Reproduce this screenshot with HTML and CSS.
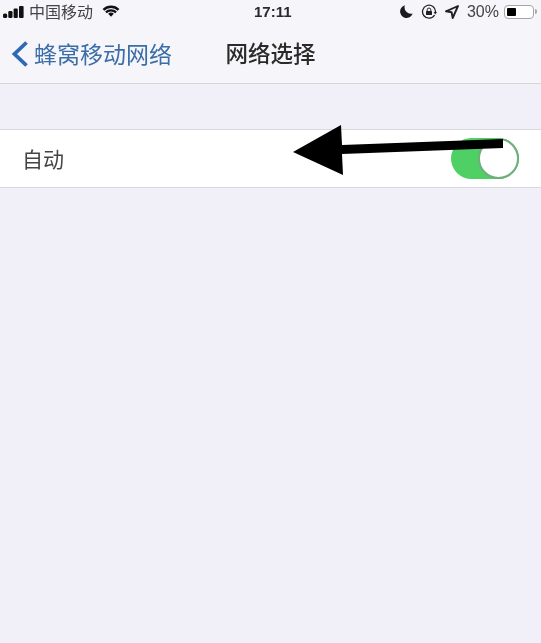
FILE: index.html
```html
<!DOCTYPE html>
<html lang="zh">
<head>
<meta charset="utf-8">
<title>网络选择</title>
<link rel="stylesheet" href="styles.css">
</head>
<body>
<div class="header">
  <div class="status">
    <div class="status-left">
      <svg class="signal" viewBox="0 0 21 12"><rect x="0" y="7.5" width="4.2" height="4.5" rx="1.6"/><rect x="5.3" y="5" width="4.2" height="7" rx="1.2"/><rect x="10.6" y="2.5" width="4.2" height="9.5" rx="1"/><rect x="16" y="0" width="4.6" height="12" rx="1"/></svg>
      <span class="carrier">中国移动</span>
      <svg class="wifi" viewBox="0 0 20 14"><path d="M1.2 5.6a12.6 12.6 0 0 1 17.6 0M4.1 8.6a8.6 8.6 0 0 1 11.8 0" fill="none" stroke="#111" stroke-width="2.8"/><path d="M6.7 10.2a4.6 4.6 0 0 1 6.6 0L10 13.8z" fill="#111"/></svg>
    </div>
    <div class="time">17:11</div>
    <div class="status-right">
      <svg class="moon" viewBox="0 0 14 14"><path d="M5.2.4a6.9 6.9 0 1 0 8.4 8.8A7 7 0 0 1 5.2.4z"/></svg>
      <svg class="lock" viewBox="0 0 16 16"><path d="M13.6 11A6.5 6.5 0 1 1 14.5 8" fill="none" stroke="#222" stroke-width="1.3"/><path d="M12.6 8h3.4l-1.7 2.4z" fill="#222"/><rect x="5" y="7" width="6" height="4" rx=".6" fill="#222"/><path d="M6.2 7.2V5.8a1.8 1.8 0 0 1 3.6 0v1.4" fill="none" stroke="#222" stroke-width="1"/></svg>
      <svg class="loc" viewBox="0 0 14 14"><path d="M13 1 1 6.3l5.6 1 1.1 5.7z" fill="none" stroke="#222" stroke-width="1.9" stroke-linejoin="round"/></svg>
      <span class="pct">30%</span>
      <div class="battery"><div class="battery-fill"></div></div>
      <div class="battery-cap"></div>
    </div>
  </div>
  <div class="nav">
    <div class="back">
      <svg class="chev" viewBox="0 0 18 28"><path d="M15.5 2.5 3.5 14 15.5 25.5" fill="none" stroke="#2d69b5" stroke-width="3.8"/></svg>
      <span>蜂窝移动网络</span>
    </div>
    <div class="title">网络选择</div>
  </div>
</div>
<div class="row">
  <span class="row-label">自动</span>
  <div class="toggle"><div class="knob"></div></div>
  <svg class="arrow" viewBox="0 0 220 64"><path d="M0 27 48 0 49 20 210 14 210 23 49 29 50 50z" fill="#000"/></svg>
</div>
</body>
</html>
```
FILE: styles.css
```css
* { box-sizing: border-box; }
html, body { margin: 0; height: 100%; }
body {
  background: #f1f0f8;
  font-family: "Noto Sans CJK SC", "Liberation Sans", sans-serif;
  color: #222;
  overflow: hidden;
}
.header {
  height: 84px;
  background: #f6f5f9;
  border-bottom: 1px solid #d6d5da;
}
.status {
  height: 24px;
  padding: 0 4px 1px 3px;
  display: flex;
  align-items: center;
  justify-content: space-between;
  position: relative;
  font-size: 14px;
  filter: blur(.35px);
}
.status-left { display: flex; align-items: center; }
.signal { width: 21px; height: 12px; fill: #111; margin-right: 5px; }
.carrier { color: #444; font-size: 16px; line-height: 20px; margin-top: -2px; }
.wifi { width: 18px; height: 12px; margin-left: 9px; margin-top: -1px; }
.time {
  position: absolute;
  left: 254px;
  top: 2px;
  font: 700 15px/20px "Liberation Sans", sans-serif;
  color: #2a2a2a;
}
.status-right { display: flex; align-items: center; }
.moon { width: 13px; height: 13px; fill: #1c1c1e; margin-right: 8px; }
.lock { width: 16px; height: 16px; margin-right: 8px; }
.loc { width: 14px; height: 14px; margin-right: 8px; }
.pct { font: 16px/20px "Liberation Sans", sans-serif; color: #444; margin-right: 5px; }
.battery {
  width: 30px;
  height: 14px;
  border: 1px solid #a5a5a8;
  border-radius: 4px;
  background: #fff;
  padding: 2px;
}
.battery-fill { width: 9px; height: 100%; background: #000; border-radius: 1px; }
.battery-cap { width: 2px; height: 5px; background: #aaa; margin-left: 1px; border-radius: 0 2px 2px 0; }
.nav {
  height: 59px;
  position: relative;
  display: flex;
  align-items: center;
  justify-content: center;
  padding-bottom: 4px;
  filter: blur(.35px);
}
.back {
  position: absolute;
  left: 11px;
  top: 14px;
  display: flex;
  align-items: center;
  gap: 5px;
  color: #3b6ea8;
  font-size: 23px;
  line-height: 30px;
}
.chev { width: 18px; height: 28px; margin-top: 2px; }
.title { font-size: 22.5px; line-height: 30px; font-weight: 500; color: #2a2a2a; }
.row {
  margin-top: 45px;
  height: 59px;
  background: #fff;
  border-top: 1px solid #d9d8de;
  border-bottom: 1px solid #d9d8de;
  position: relative;
  display: flex;
  align-items: center;
  justify-content: space-between;
  padding: 0 22px 2px 22px;
}
.row-label { font-size: 21px; line-height: 30px; color: #444; filter: blur(.35px); }
.toggle {
  width: 68px;
  height: 41px;
  border-radius: 21px;
  background: #4fd065;
  position: relative;
  margin-top: 2px;
  filter: blur(.5px);
}
.knob {
  position: absolute;
  right: 0;
  top: 0;
  width: 41px;
  height: 41px;
  border-radius: 50%;
  background: #fff;
  border: 2px solid #6fae7b;
}
.arrow {
  position: absolute;
  left: 293px;
  top: -5px;
  width: 220px;
  height: 64px;
}
```
